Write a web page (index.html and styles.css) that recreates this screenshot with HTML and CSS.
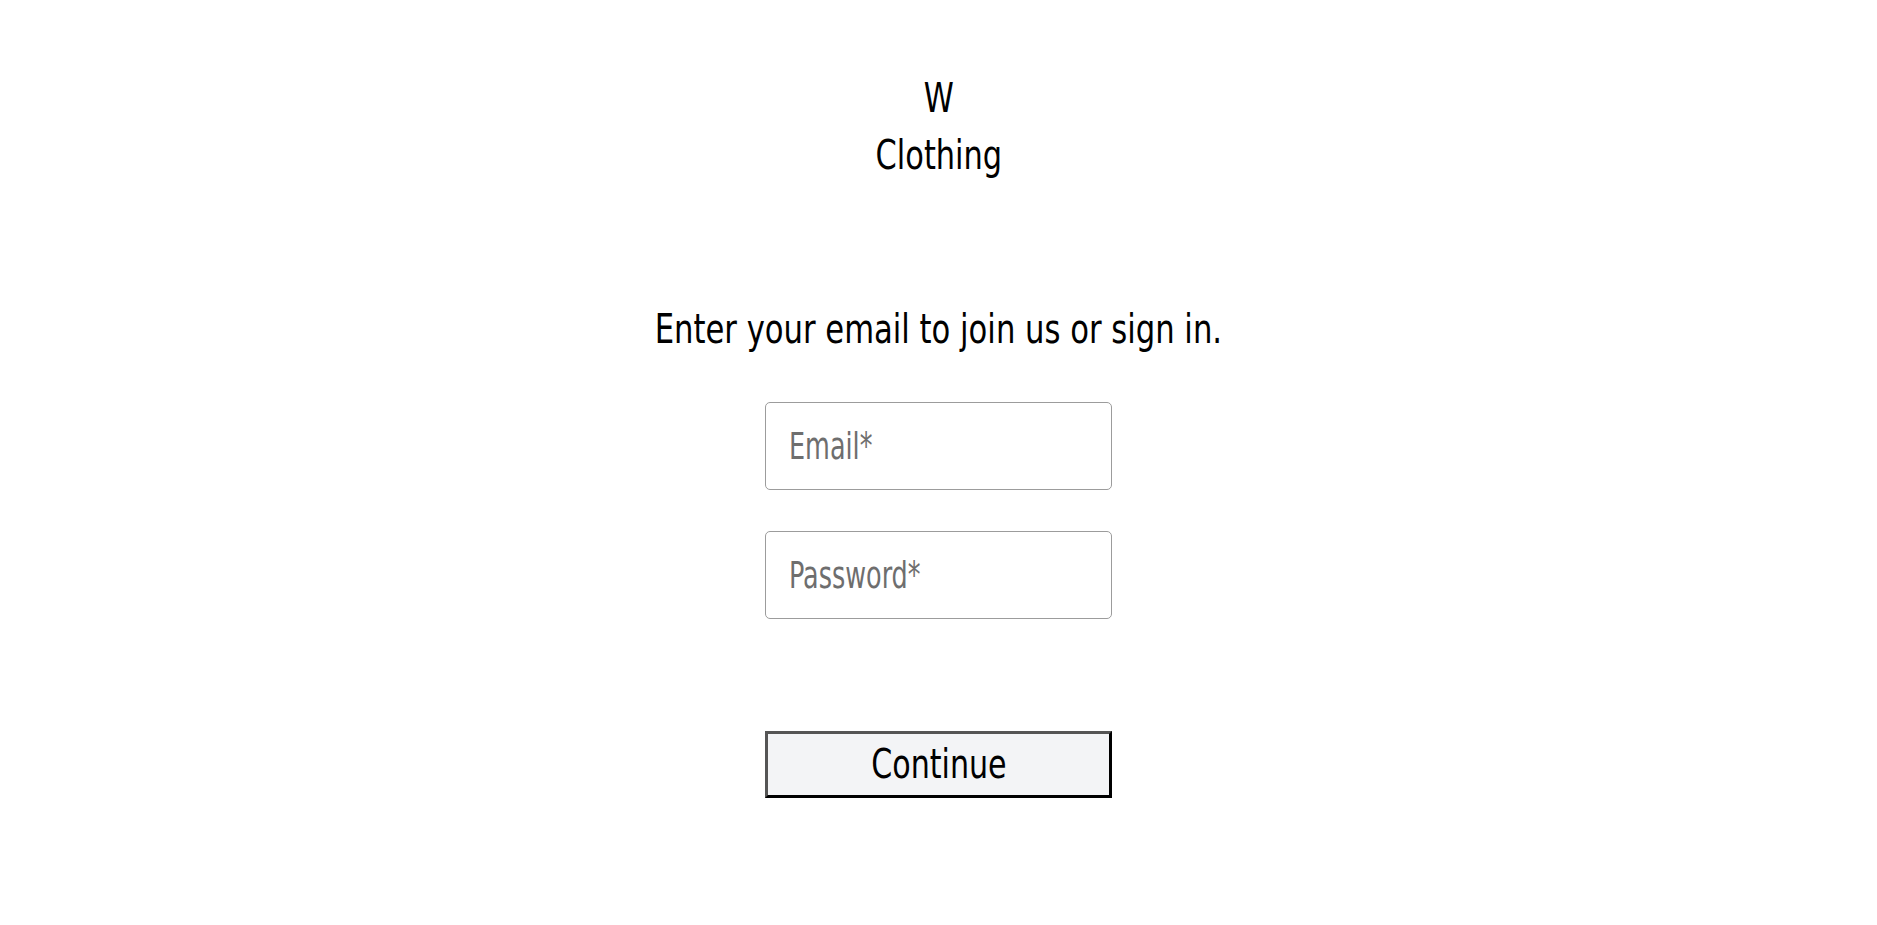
FILE: index.html
```html
<!DOCTYPE html>
<html lang="en">
<head>
<meta charset="utf-8">
<title>W Clothing - Sign in</title>
<link rel="stylesheet" href="styles.css">
</head>
<body>
<main class="page">
  <header class="logo">
    <span class="logo-line">W</span>
    <span class="logo-line">Clothing</span>
  </header>
  <form class="signin">
    <h1 class="title"><span class="title-text">Enter your email to join us or sign in.</span></h1>
    <div class="fields">
      <div class="field-wrap">
        <input class="field" id="email" type="email" placeholder=" ">
        <label class="field-label" for="email">Email*</label>
      </div>
      <div class="field-wrap">
        <input class="field" id="password" type="password" placeholder=" ">
        <label class="field-label" for="password">Password*</label>
      </div>
    </div>
    <button class="continue" type="button"><span class="continue-text">Continue</span></button>
  </form>
</main>
</body>
</html>
```
FILE: styles.css
```css
html, body {
  margin: 0;
  padding: 0;
  background: #ffffff;
}

body {
  font-family: "DejaVu Sans", "Liberation Sans", sans-serif;
  font-stretch: condensed;
  color: #000000;
}

.page {
  display: flex;
  flex-direction: column;
  align-items: center;
  padding-top: 70px;
}

.logo {
  display: flex;
  flex-direction: column;
  align-items: center;
  font-size: 40px;
  line-height: 57px;
}

.logo-line {
  display: inline-block;
  transform: scaleX(0.845);
}

.signin {
  display: flex;
  flex-direction: column;
  align-items: center;
  margin-top: 120px;
}

.title {
  margin: 0;
  font-size: 41px;
  font-weight: 400;
  line-height: 50px;
  white-space: nowrap;
}

.title-text {
  display: inline-block;
  transform: scaleX(0.831);
}

.fields {
  display: flex;
  flex-direction: column;
  gap: 41px;
  margin-top: 48px;
}

.field-wrap {
  position: relative;
  width: 347px;
  height: 88px;
}

.field {
  box-sizing: border-box;
  width: 100%;
  height: 100%;
  margin: 0;
  padding: 0 20px 0 24px;
  border: 1px solid #9c9c9c;
  border-radius: 5px;
  font-family: inherit;
  font-stretch: condensed;
  font-size: 30px;
  color: #000;
  background: #fff;
  outline: none;
}

.field-label {
  position: absolute;
  left: 24px;
  top: 50%;
  font-size: 38px;
  line-height: normal;
  color: #6e6e6e;
  transform: translateY(-50%) scaleX(0.745);
  transform-origin: left center;
  pointer-events: none;
  white-space: nowrap;
}

.field:not(:placeholder-shown) + .field-label {
  display: none;
}

.continue {
  box-sizing: border-box;
  width: 347px;
  height: 67px;
  margin-top: 112px;
  padding: 0;
  border: 3px solid;
  border-color: #555555 #000000 #000000 #555555;
  background: #f3f4f6;
  font-family: inherit;
  font-stretch: condensed;
  font-size: 41px;
  line-height: 1;
  color: #000;
  cursor: pointer;
}

.continue-text {
  display: inline-block;
  transform: scaleX(0.816);
}
```
